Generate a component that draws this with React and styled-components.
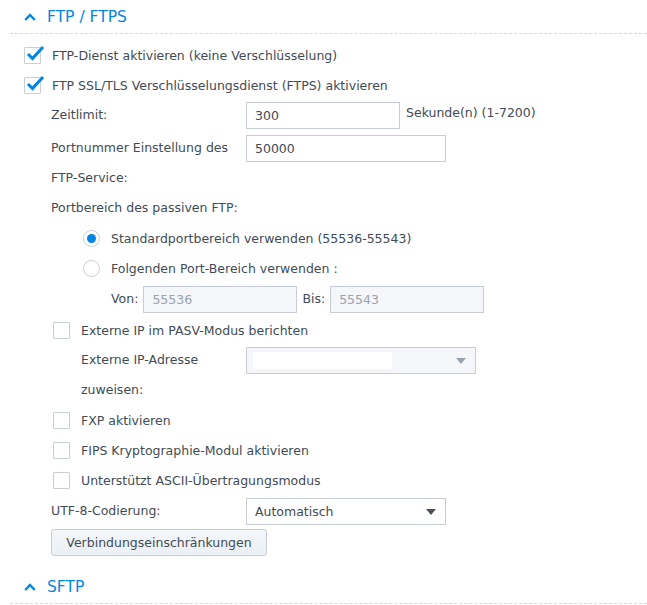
import React from "react";
import styled, { createGlobalStyle } from "styled-components";

const GlobalStyle = createGlobalStyle`
  body {
    margin: 0;
    background: #ffffff;
    font-family: "DejaVu Sans", Verdana, sans-serif;
    font-size: 12.5px;
    color: #414b55;
  }
`;

const Page = styled.div`
  width: 647px;
  height: 605px;
  overflow: hidden;
`;

const SectionHeader = styled.div`
  display: flex;
  align-items: center;
  gap: 11px;
  height: ${(p) => p.h}px;
  margin: ${(p) => p.top}px 0 0 10px;
  padding-left: 14px;
  border-bottom: 1px dashed #d3d9e0;
  color: #0086e5;
  font-size: 15.5px;
`;

const Body = styled.div`
  padding: 6px 0 0 24px;
`;

const CheckRow = styled.label`
  display: flex;
  align-items: center;
  gap: 11px;
  height: 30px;
  margin-left: ${(p) => p.indent || 0}px;
`;

const Box = styled.span`
  position: relative;
  width: 15px;
  height: 15px;
  border: 1px solid #c8cfd7;
  border-radius: 1px;
  background: #fff;
  flex: none;
  svg {
    position: absolute;
    left: 1px;
    top: -3px;
  }
`;

const Radio = styled.span`
  width: 15px;
  height: 15px;
  border: 1px solid #c8cfd7;
  border-radius: 50%;
  background: #fff;
  flex: none;
  display: flex;
  align-items: center;
  justify-content: center;
  &::after {
    content: "";
    width: 9px;
    height: 9px;
    border-radius: 50%;
    background: ${(p) => (p.checked ? "#0086e5" : "transparent")};
  }
`;

const RadioRow = styled.div`
  display: flex;
  align-items: center;
  gap: 11px;
  height: 30px;
  margin-left: 59px;
`;

const FieldRow = styled.div`
  display: flex;
  align-items: flex-start;
  margin: ${(p) => p.mt || 0}px 0 ${(p) => p.mb || 0}px ${(p) => p.indent || 27}px;
`;

const Label = styled.div`
  width: ${(p) => p.w}px;
  flex: none;
  line-height: 30px;
`;

const Text = styled.div`
  line-height: 30px;
  margin-left: ${(p) => p.indent || 0}px;
`;

const Input = styled.div`
  box-sizing: border-box;
  width: ${(p) => p.w}px;
  height: 27px;
  margin-top: 2px;
  padding: 0 8px;
  border: 1px solid #c6cdd5;
  background: ${(p) => (p.disabled ? "#f4f6f9" : "#fff")};
  color: ${(p) => (p.disabled ? "#9aa3ad" : "#414b55")};
  line-height: 25px;
  flex: none;
`;

const Suffix = styled.div`
  margin-left: 6px;
  line-height: 26px;
`;

const Select = styled(Input)`
  display: flex;
  align-items: center;
  padding: 0 9px 0 8px;
  justify-content: space-between;
`;

const Blank = styled.span`
  width: 139px;
  height: 17px;
  background: #fff;
  margin-left: -2px;
`;

const Arrow = styled.span`
  width: 0;
  height: 0;
  border-left: 5px solid transparent;
  border-right: 5px solid transparent;
  border-top: 6px solid ${(p) => (p.muted ? "#9aa3ad" : "#4a525b")};
`;

const Pair = styled.div`
  display: flex;
  align-items: flex-start;
  margin: 1px 0 1px 87px;
`;

const SmallLabel = styled.div`
  line-height: 30px;
  margin: 0 ${(p) => p.gap}px 0 ${(p) => p.lead || 0}px;
`;

const Button = styled.button`
  box-sizing: border-box;
  margin: 3px 0 0 27px;
  width: 216px;
  height: 27px;
  border: 1px solid #c5ced8;
  border-radius: 3px;
  background: linear-gradient(#f4f7fa, #ebf0f5);
  font-family: inherit;
  font-size: 12.5px;
  color: #414b55;
  padding: 0;
`;

function Chevron() {
  return (
    <svg width="12" height="8" viewBox="0 0 12 8">
      <path d="M1.2 7 L6 2 L10.8 7" fill="none" stroke="#0086e5" strokeWidth="2.4" />
    </svg>
  );
}

function Check({ checked, children, indent }) {
  return (
    <CheckRow indent={indent}>
      <Box>
        {checked && (
          <svg width="20" height="17" viewBox="0 0 20 17">
            <path d="M2 9 L6.5 13.5 L17 2" fill="none" stroke="#0086e5" strokeWidth="3" />
          </svg>
        )}
      </Box>
      {children}
    </CheckRow>
  );
}

export default function App() {
  return (
    <Page>
      <GlobalStyle />
      <SectionHeader h={33} top={0}>
        <Chevron />
        FTP / FTPS
      </SectionHeader>
      <Body>
        <Check checked>FTP-Dienst aktivieren (keine Verschlüsselung)</Check>
        <Check checked>FTP SSL/TLS Verschlüsselungsdienst (FTPS) aktivieren</Check>
        <FieldRow mb={3}>
          <Label w={195}>Zeitlimit:</Label>
          <Input w={154}>300</Input>
          <Suffix>Sekunde(n) (1-7200)</Suffix>
        </FieldRow>
        <FieldRow>
          <Label w={195}>
            Portnummer Einstellung des
            <br />
            FTP-Service:
          </Label>
          <Input w={200}>50000</Input>
        </FieldRow>
        <Text indent={27}>Portbereich des passiven FTP:</Text>
        <RadioRow>
          <Radio checked />
          Standardportbereich verwenden (55536-55543)
        </RadioRow>
        <RadioRow>
          <Radio />
          Folgenden Port-Bereich verwenden :
        </RadioRow>
        <Pair>
          <SmallLabel gap={5}>Von:</SmallLabel>
          <Input w={154} disabled>
            55536
          </Input>
          <SmallLabel gap={5} lead={5}>
            Bis:
          </SmallLabel>
          <Input w={154} disabled>
            55543
          </Input>
        </Pair>
        <Check indent={29}>Externe IP im PASV-Modus berichten</Check>
        <FieldRow indent={57}>
          <Label w={165}>
            Externe IP-Adresse
            <br />
            zuweisen:
          </Label>
          <Select w={230} disabled>
            <Blank />
            <Arrow muted />
          </Select>
        </FieldRow>
        <Check indent={29}>FXP aktivieren</Check>
        <Check indent={29}>FIPS Kryptographie-Modul aktivieren</Check>
        <Check indent={29}>Unterstützt ASCII-Übertragungsmodus</Check>
        <FieldRow mt={1}>
          <Label w={195}>UTF-8-Codierung:</Label>
          <Select w={200}>
            Automatisch
            <Arrow />
          </Select>
        </FieldRow>
        <Button>Verbindungseinschränkungen</Button>
      </Body>
      <SectionHeader h={32} top={15}>
        <Chevron />
        SFTP
      </SectionHeader>
    </Page>
  );
}
